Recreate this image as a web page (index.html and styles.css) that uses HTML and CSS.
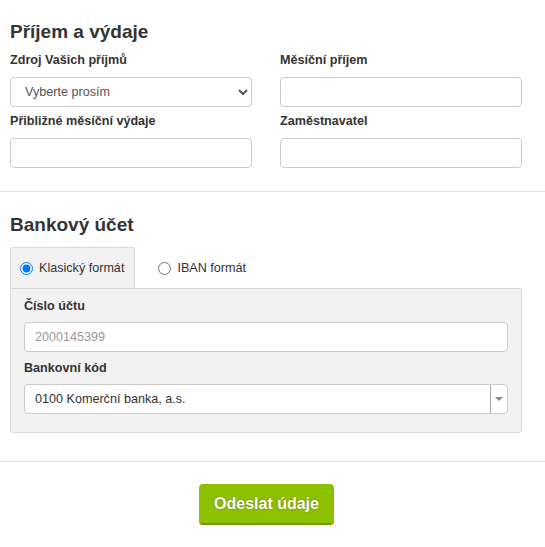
FILE: index.html
```html
<!DOCTYPE html>
<html lang="cs">
<head>
<meta charset="utf-8">
<link rel="stylesheet" href="styles.css">
</head>
<body>
<section class="section section-income">
  <h2 class="heading">Příjem a výdaje</h2>
  <div class="grid">
    <div class="group">
      <label class="label">Zdroj Vašich příjmů</label>
      <select class="control select-native">
        <option>Vyberte prosím</option>
      </select>
    </div>
    <div class="group">
      <label class="label">Měsíční příjem</label>
      <input class="control" type="text">
    </div>
    <div class="group">
      <label class="label">Přibližné měsíční výdaje</label>
      <input class="control" type="text">
    </div>
    <div class="group">
      <label class="label">Zaměstnavatel</label>
      <input class="control" type="text">
    </div>
  </div>
</section>
<section class="section section-bank">
  <h2 class="heading heading-bank">Bankový účet</h2>
  <div class="tabs">
    <label class="tab tab-active"><input class="radio" type="radio" name="fmt" checked>Klasický formát</label>
    <label class="tab"><input class="radio" type="radio" name="fmt">IBAN formát</label>
  </div>
  <div class="panel">
    <div class="group">
      <label class="label">Číslo účtu</label>
      <input class="control control-panel" type="text" placeholder="2000145399">
    </div>
    <div class="group">
      <label class="label">Bankovní kód</label>
      <div class="combo">
        <span class="combo-value">0100 Komerční banka, a.s.</span>
        <span class="combo-arrow"><span class="triangle"></span></span>
      </div>
    </div>
  </div>
</section>
<div class="actions">
  <button class="submit" type="button">Odeslat údaje</button>
</div>
</body>
</html>
```
FILE: styles.css
```css
* { box-sizing: border-box; }
html, body { margin: 0; padding: 0; background: #fff; }
body {
  font-family: "Liberation Sans", Arial, sans-serif;
  color: #333;
  font-size: 12.6px;
  width: 545px;
}
.section {
  border-bottom: 1px solid #e1e1e1;
}
.section-income {
  padding: 20px 10px 23px;
}
.section-bank {
  padding: 21px 10px 28px;
}
.heading {
  margin: 0 0 8px;
  font-size: 19px;
  line-height: 24px;
  font-weight: bold;
  color: #333;
}
.heading-bank {
  margin-bottom: 10px;
}
.grid {
  width: 512px;
  display: grid;
  grid-template-columns: 242px 242px;
  column-gap: 28px;
  row-gap: 6px;
}
.label {
  display: block;
  font-size: 12.6px;
  line-height: 17px;
  font-weight: bold;
  color: #333;
  margin-bottom: 8px;
}
.control {
  display: block;
  width: 100%;
  height: 30px;
  margin: 0;
  border: 1px solid #ccc;
  border-radius: 4px;
  background: #fff;
  font-family: "Liberation Sans", Arial, sans-serif;
  font-size: 12.6px;
  color: #555;
  padding: 0 10px;
  outline: none;
}
.select-native {
  padding-left: 10px;
  color: #555;
}
.control::placeholder { color: #999; }
.tabs {
  display: flex;
  width: 512px;
}
.tab {
  display: flex;
  align-items: center;
  height: 41px;
  padding: 0 10px 0 9px;
  border: 1px solid transparent;
  border-bottom: none;
  border-radius: 3px 3px 0 0;
  font-size: 12.6px;
  color: #333;
}
.tab-active {
  background: #f2f2f2;
  border-color: #dadada;
}
.tab + .tab {
  margin-left: 13px;
}
.radio {
  width: 13px;
  height: 13px;
  margin: 0 6px 0 0;
}
.panel {
  width: 512px;
  background: #f2f2f2;
  border: 1px solid #d8d8d8;
  border-radius: 0 0 3px 3px;
  padding: 9px 13px 18px;
}
.panel .label { margin-bottom: 7px; }
.panel .group + .group { margin-top: 8px; }
.control-panel { padding-left: 10px; }
.combo {
  display: flex;
  height: 30px;
  background: #fff;
  border: 1px solid #ccc;
  border-radius: 4px;
}
.combo-value {
  flex: 1;
  display: flex;
  align-items: center;
  padding-left: 10px;
  color: #333;
  font-size: 12.6px;
}
.combo-arrow {
  width: 17px;
  border-left: 1px solid #aaa;
  display: flex;
  align-items: center;
  justify-content: center;
}
.triangle {
  width: 0;
  height: 0;
  border-left: 4px solid transparent;
  border-right: 4px solid transparent;
  border-top: 4px solid #888;
}
.actions {
  display: flex;
  justify-content: center;
  padding-top: 22px;
}
.submit {
  width: 135px;
  height: 41px;
  margin-left: -12px;
  background: #8dc100;
  border: none;
  border-bottom: 2px solid #6f9a00;
  border-radius: 4px;
  color: #fff;
  font-family: "Liberation Sans", Arial, sans-serif;
  font-size: 16px;
  font-weight: bold;
  text-shadow: 0 0 2px rgba(0,0,0,0.35);
  padding: 0;
}
```
